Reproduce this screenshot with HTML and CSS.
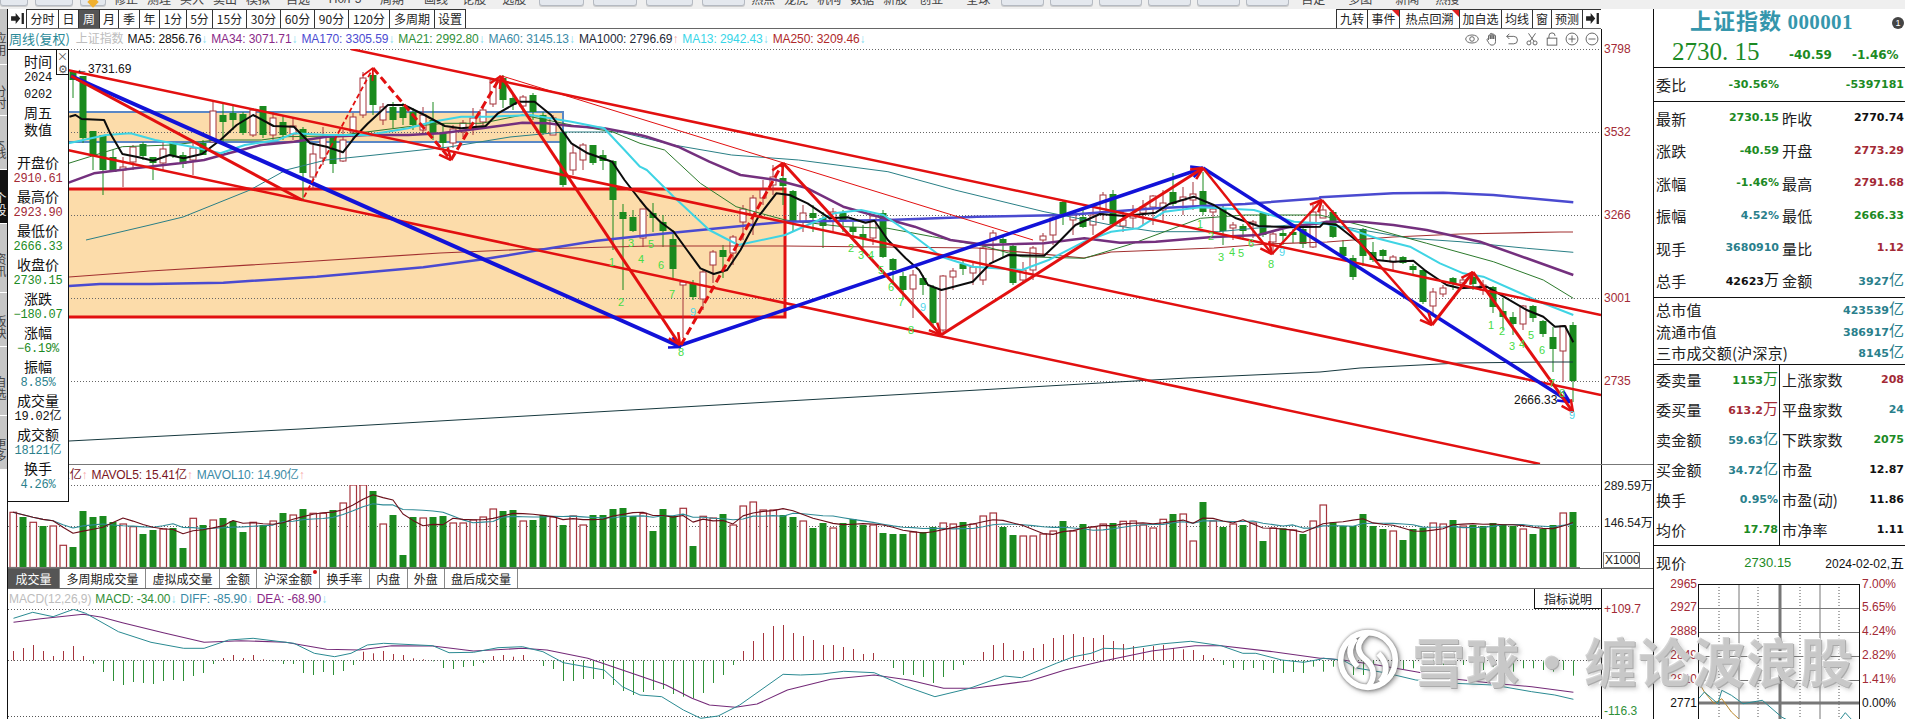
FILE: index.html
```html
<!DOCTYPE html>
<html lang="zh-CN">
<head>
<meta charset="utf-8">
<title>上证指数 周线</title>
<link rel="stylesheet" href="styles.css">
</head>
<body>
<div class="app">
  <div class="band">
    <span class="bbtn w28"></span><span class="bbtn w38"></span><span class="bbtn w26 dia"><i></i></span>
    <span class="bt ml8">修正</span><span class="bt">测理</span><span class="bt">买入</span><span class="bt">卖出</span><span class="bt">模拟</span>
    <span class="bt ml7">自选</span><span class="bt ml7 w38t">H0/F5</span><span class="bt ml7">周期</span><span class="bt ml11">画线</span><span class="bt ml5">论股</span><span class="bt ml7">选股</span>
    <span class="bbtn w45 ml4"></span><span class="bbtn w44"></span><span class="bbtn w47"></span><span class="bbtn w43"></span>
    <span class="bt ml0">热点</span><span class="bt">龙虎</span><span class="bt">机构</span><span class="bt">数据</span><span class="bt">新股</span><span class="bt ml3">创业</span><span class="bt ml14">全球</span>
    <span class="bbtn w43 ml2"></span><span class="bbtn w43"></span><span class="bbtn w43"></span><span class="bbtn w43"></span><span class="bbtn w43"></span><span class="bbtn w43"></span>
    <span class="bt ml6">自定</span><span class="bt ml14">多图</span><span class="bt ml14">新闻</span><span class="bt ml7">热搜</span>
  </div>
  <div class="main">
    <nav class="rail">
      <span class="rt h55">应用</span><span class="rt h50">分时</span><span class="rt h53">K线</span><span class="rt h53 on">个股</span><span class="rt h68">资讯</span><span class="rt h53">板块</span><span class="rt h68">自选</span><span class="rt h53">更多</span>
    </nav>
    <section class="chart">
      <div class="toolbar">
        <span class="tabs">
          <span class="arrow-btn"><svg viewBox="0 0 14 12"><path d="M0 3.500h5V0l5 6-5 6V8.500H0zM11.500 0H14v12h-2.500z"/></svg></span>
          <span class="tab w32">分时</span><span class="tab w20">日</span><span class="tab w21 on">周</span><span class="tab w19">月</span><span class="tab w21">季</span><span class="tab w20">年</span><span class="tab w27">1分</span><span class="tab w26">5分</span><span class="tab w34">15分</span><span class="tab w34">30分</span><span class="tab w34">60分</span><span class="tab w34">90分</span><span class="tab w41">120分</span><span class="tab w45">多周期</span><span class="tab w32 endb">设置</span>
        </span>
        <span class="tabs">
          <span class="tab w31">九转</span><span class="tab w32 flag">事件</span><span class="tab w60 flag">热点回溯</span><span class="tab w42">加自选</span><span class="tab w31">均线</span><span class="tab w19">窗</span><span class="tab w31">预测</span><span class="tab w19 ar"><svg viewBox="0 0 14 12"><path d="M0 3.500h5V0l5 6-5 6V8.500H0zM11.500 0H14v12h-2.500z"/></svg></span>
        </span>
      </div>

      <div class="row">
        <div class="plot">
          <div class="legend">
            <span class="c-teal">周线(复权)</span><span class="c-mute ml6">上证指数</span>
            <span class="ma ml4">MA5: 2856.76<b class="dn">↓</b></span>
            <span class="ma c-pur">MA34: 3071.71<b class="dn">↓</b></span>
            <span class="ma c-blu">MA170: 3305.59<b class="dn">↓</b></span>
            <span class="ma c-grn">MA21: 2992.80<b class="dn">↓</b></span>
            <span class="ma c-sky">MA60: 3145.13<b class="dn">↓</b></span>
            <span class="ma c-nav">MA1000: 2796.69<b class="up">↑</b></span>
            <span class="ma c-cya">MA13: 2942.43<b class="dn">↓</b></span>
            <span class="ma c-red">MA250: 3209.46<b class="dn">↓</b></span>
            <span class="tools">
              <svg viewBox="0 0 16 16"><ellipse cx="8" cy="8" rx="7.2" ry="4.6"/><circle cx="8" cy="8" r="2.6"/></svg>
              <svg viewBox="0 0 16 16"><path d="M4 9V4.500a1 1 0 0 1 2 0V8M6 8V2.500a1 1 0 0 1 2 0V8M8 8V3a1 1 0 0 1 2 0v5M10 8V4.500a1 1 0 0 1 2 0V11c0 2.500-1.500 4-4 4-2 0-3-1-4-3L2.300 9.200c-.6-1 .8-1.900 1.700-.7"/></svg>
              <svg viewBox="0 0 16 16"><path d="M5 2 2 5l3 3M2 5h8a3.800 3.800 0 0 1 0 8.500H4"/></svg>
              <svg viewBox="0 0 16 16"><circle cx="4.500" cy="12.500" r="2.300"/><circle cx="11.500" cy="12.500" r="2.300"/><path d="M5.800 10.600 12 1.500M10.200 10.600 4 1.500"/></svg>
              <svg viewBox="0 0 16 16"><rect x="2.500" y="7" width="11" height="8"/><path d="M4.500 7V4.500a3.500 3.500 0 0 1 7 0"/></svg>
              <svg viewBox="0 0 16 16"><circle cx="8" cy="8" r="6.800"/><path d="M4 8h8M8 4v8"/></svg>
              <svg viewBox="0 0 16 16"><circle cx="8" cy="8" r="6.800"/><path d="M4 8h8"/></svg>
            </span>
          </div>
          <svg id="price" class="canvas h-price" viewBox="8 49 1593 415"></svg>
        </div>
        <div class="axis ax-price">
          <span class="al h83">3798</span><span class="al h83">3532</span><span class="al h83">3266</span><span class="al h83">3001</span><span class="al h83">2735</span>
        </div>
      </div>

      <div class="row vol">
        <div class="plot">
          <div class="legend vol-legend">
            <span class="c-maroon">19.02亿<b class="up">↑</b></span>
            <span class="ma c-maroon">MAVOL5: 15.41亿<b class="up">↑</b></span>
            <span class="ma c-sky">MAVOL10: 14.90亿<b class="up">↑</b></span>
          </div>
          <svg id="volume" class="canvas h-vol" viewBox="8 485 1593 83"></svg>
        </div>
        <div class="axis ax-vol">
          <span class="al h40 dk">289.59万</span><span class="al h40 dk">146.54万</span>
          <span class="x1000">X1000</span>
        </div>
      </div>

      <div class="subtabs">
        <span class="stab w52 on">成交量</span><span class="stab w86">多周期成交量</span><span class="stab w74">虚拟成交量</span><span class="stab w37">金额</span><span class="stab w63 dot">沪深金额</span><span class="stab w50">换手率</span><span class="stab w375">内盘</span><span class="stab w375">外盘</span><span class="stab w74 endb">盘后成交量</span>
      </div>

      <div class="row macd">
        <div class="plot">
          <div class="legend">
            <span class="c-mute">MACD(12,26,9)</span>
            <span class="ma c-grn">MACD: -34.00<b class="dn">↓</b></span>
            <span class="ma c-sky">DIFF: -85.90<b class="dn">↓</b></span>
            <span class="ma c-pur">DEA: -68.90<b class="dn">↓</b></span>
            <span class="explain">指标说明</span>
          </div>
          <svg id="macd" class="canvas h-macd" viewBox="8 609 1593 110"></svg>
        </div>
        <div class="axis ax-macd">
          <span class="al h51">+109.7</span><span class="al h55 pale">+0</span><span class="al c-grn">-116.3</span>
        </div>
      </div>

      <aside class="info">
        <span class="closer"><i>×</i><i>⚙</i></span>
        <span class="cj">时间</span><span class="mn">2024</span><span class="mn">0202</span><span class="cj">周五</span><span class="cj">数值</span><span class="blank"></span>
        <span class="cj">开盘价</span><span class="mn r">2910.61</span>
        <span class="cj">最高价</span><span class="mn r">2923.90</span>
        <span class="cj">最低价</span><span class="mn g">2666.33</span>
        <span class="cj">收盘价</span><span class="mn g">2730.15</span>
        <span class="cj">涨跌</span><span class="mn g">−180.07</span>
        <span class="cj">涨幅</span><span class="mn g">−6.19%</span>
        <span class="cj">振幅</span><span class="mn t">8.85%</span>
        <span class="cj">成交量</span><span class="mn">19.02亿</span>
        <span class="cj">成交额</span><span class="mn t">18121亿</span>
        <span class="cj">换手</span><span class="mn t">4.26%</span>
      </aside>
    </section>

    <aside class="panel">
      <div class="head">
        <div class="title"><span class="tname">上证指数</span> <b>000001</b><i class="badge">1</i></div>
        <div class="pricebar"><span class="last">2730. 15</span><span class="val g hv1">-40.59</span><span class="val g hv2">-1.46%</span></div>
      </div>
      <div class="grid wb">
        <div class="cell"><span class="lbl">委比</span><span class="val g">-30.56%</span></div><div class="cell end"><span class="val g">-5397181</span></div>
      </div>
      <div class="grid quotes">
        <div class="cell"><span class="lbl">最新</span><span class="val g">2730.15</span></div><div class="cell"><span class="lbl">昨收</span><span class="val k">2770.74</span></div>
        <div class="cell"><span class="lbl">涨跌</span><span class="val g">-40.59</span></div><div class="cell"><span class="lbl">开盘</span><span class="val r">2773.29</span></div>
        <div class="cell"><span class="lbl">涨幅</span><span class="val g">-1.46%</span></div><div class="cell"><span class="lbl">最高</span><span class="val r">2791.68</span></div>
        <div class="cell"><span class="lbl">振幅</span><span class="val t">4.52%</span></div><div class="cell"><span class="lbl">最低</span><span class="val g">2666.33</span></div>
        <div class="cell"><span class="lbl">现手</span><span class="val t">3680910</span></div><div class="cell"><span class="lbl">量比</span><span class="val r">1.12</span></div>
        <div class="cell"><span class="lbl">总手</span><span class="val k">42623<u>万</u></span></div><div class="cell"><span class="lbl">金额</span><span class="val t">3927<u>亿</u></span></div>
      </div>
      <div class="wide">
        <div class="cell"><span class="lbl">总市值</span><span class="val t">423539<u>亿</u></span></div>
        <div class="cell"><span class="lbl">流通市值</span><span class="val t">386917<u>亿</u></span></div>
        <div class="cell"><span class="lbl">三市成交额(沪深京)</span><span class="val t">8145<u>亿</u></span></div>
      </div>
      <div class="grid lower">
        <div class="cell"><span class="lbl">委卖量</span><span class="val g">1153<u>万</u></span></div><div class="cell"><span class="lbl">上涨家数</span><span class="val r">208</span></div>
        <div class="cell"><span class="lbl">委买量</span><span class="val r">613.2<u>万</u></span></div><div class="cell"><span class="lbl">平盘家数</span><span class="val t">24</span></div>
        <div class="cell"><span class="lbl">卖金额</span><span class="val t">59.63<u>亿</u></span></div><div class="cell"><span class="lbl">下跌家数</span><span class="val g">2075</span></div>
        <div class="cell"><span class="lbl">买金额</span><span class="val t">34.72<u>亿</u></span></div><div class="cell"><span class="lbl">市盈</span><span class="val k">12.87</span></div>
        <div class="cell"><span class="lbl">换手</span><span class="val t">0.95%</span></div><div class="cell"><span class="lbl">市盈(动)</span><span class="val k">11.86</span></div>
        <div class="cell"><span class="lbl">均价</span><span class="val g">17.78</span></div><div class="cell"><span class="lbl">市净率</span><span class="val k">1.11</span></div>
      </div>
      <div class="cell now"><span class="lbl">现价</span><span class="nowp">2730.15</span><span class="nowd">2024-02-02,<u>五</u></span></div>
      <div class="mini">
        <div class="mini-l"><span>2965</span><span>2927</span><span>2888</span><span>2849</span><span>2810</span><span class="k">2771</span></div>
        <svg id="mini" class="mini-c" viewBox="1699 582 162 137"></svg>
        <div class="mini-r"><span>7.00%</span><span>5.65%</span><span>4.24%</span><span>2.82%</span><span>1.41%</span><span class="k">0.00%</span></div>
      </div>
    </aside>
  </div>
</div>

<div class="watermark">
  <svg viewBox="0 0 70 70">
    <circle cx="35" cy="35" r="29"/>
    <path d="M35 6C20 18 24 28 33 35 41 42 44 52 35 64"/>
    <path d="M22 12C12 24 16 34 24 42M48 58C58 46 54 36 46 28"/>
  </svg>
  <span>雪球</span><span class="wd">·</span><span>缠论波浪股</span>
</div>
<script src="script.js"></script>
</body>
</html>
```

FILE: styles.css
```css
:root{
  --cjk:"Noto Sans CJK SC","Liberation Sans",sans-serif;
  --lat:"Liberation Sans","Noto Sans CJK SC",sans-serif;
  --green:#1c8a24;
  --red:#a32a36;
  --teal:#2a7f8c;
}
*{box-sizing:border-box}
html,body{margin:0;height:719px;overflow:hidden;background:#fff}
body{position:relative;width:1905px;font-family:var(--cjk);color:#111}
i,b,u{font-style:normal;font-weight:normal;text-decoration:none}

.app{display:flex;flex-direction:column;width:1905px;height:719px}

/* clipped top ribbon */
.band{flex:0 0 9px;display:flex;align-items:flex-end;gap:9px;background:#efefef;overflow:hidden;padding:0 0 3px;font-size:12px;line-height:14px;color:#444;white-space:nowrap}
.bt{flex:0 0 24px;text-align:center}
.w38t{flex-basis:38px;font-family:var(--lat)}
.bbtn{height:16px;border:1px solid #b5bac2;border-radius:3px;background:#e4e8ee;box-shadow:0 1px 0 #ccc;flex:none}
.band .w28{width:28px}.band .w38{width:38px;margin-left:-2px}.band .w26{width:26px;margin-left:-2px}
.band .w45{width:45px}.band .w44{width:44px}.band .w47{width:47px}.band .w43{width:43px;margin-right:-3px}
.dia{position:relative}
.dia i{position:absolute;left:8px;top:7px;width:8px;height:8px;background:#f0b030;transform:rotate(45deg)}
.ml0{margin-left:0}.ml2{margin-left:2px}.ml3{margin-left:3px}.ml4{margin-left:4px}.ml5{margin-left:5px}.ml6{margin-left:6px}.ml7{margin-left:7px}.ml8{margin-left:-1px}.ml11{margin-left:11px}.ml14{margin-left:14px}

.main{flex:1;display:flex;min-height:0}

/* left rail */
.rail{flex:0 0 7px;display:flex;flex-direction:column;gap:1px;overflow:hidden}
.rt{display:block;width:7px;background:#c6c6c6;overflow:hidden;font-size:12px;line-height:14px;color:#444;writing-mode:vertical-rl;text-align:center;text-indent:14px}
.rt.on{background:#111;color:#eee}
.h55{height:55px}.h50{height:50px}.h53{height:53px}.h68{height:68px}

/* chart column */
.chart{position:relative;flex:0 0 1647px;display:flex;flex-direction:column;border-left:1px solid #111;border-right:1px solid #111;min-height:0}
.toolbar{flex:0 0 20px;width:1593px;display:flex;justify-content:space-between;border-bottom:1px solid #666;font-size:12px}
.tabs{display:flex}
.arrow-btn{width:18px;display:flex;align-items:center;justify-content:center}
.arrow-btn svg,.ar svg{width:13px;height:11px;fill:#222}
.tab{display:block;border-left:1px solid #333;border-top:1px solid #333;text-align:center;line-height:18px;height:19px;color:#222;white-space:nowrap}
.tab.on{background:#555;color:#fff}
.endb{border-right:1px solid #333}
.flag{position:relative}
.flag::after{content:"";position:absolute;right:0;top:0;border-top:7px solid #e02020;border-left:7px solid transparent}
.w19{width:19px}.w20{width:20px}.w21{width:21px}.w26{width:26px}.w27{width:27px}.w31{width:31px}.w32{width:32px}.w34{width:34px}.w41{width:41px}.w42{width:42px}.w45{width:45px}.w60{width:60px}

.row{display:flex;flex:none}
.plot{flex:0 0 1593px;display:flex;flex-direction:column;position:relative;min-width:0}
.legend{flex:0 0 20px;display:flex;align-items:center;font:12px/20px var(--lat);letter-spacing:-.08px;white-space:nowrap;padding-left:1px}
.ma{margin-left:4px}
.ml4.ma{margin-left:4px}
.dn{color:#82dcf0;font-size:12px}.up{color:#f8a8a8;font-size:12px}
.c-teal{color:#2a8a98;font-family:var(--cjk);font-size:13px;letter-spacing:0}
.c-mute{color:#bdbdbd}
.c-pur{color:#8a2a88}.c-blu{color:#4c4cd2}.c-grn{color:#2f8f38}.c-sky{color:#3a8aa6}.c-nav{color:#1e2a38}.c-cya{color:#38d6e8}.c-red{color:#b02a2a}.c-maroon{color:#7a1422}
.tools{margin-left:auto;display:flex;gap:6px;padding-right:2px}
.tools svg{width:14px;height:14px;fill:none;stroke:#555;stroke-width:1}

.canvas{display:block;width:1593px}
.h-price{height:415px}.h-vol{height:83px}.h-macd{height:110px}

.axis{flex:0 0 52px;border-left:1px solid #111;display:flex;flex-direction:column;font:12px/16px var(--lat);color:var(--red);padding-left:2px;white-space:nowrap}
.al{display:block}
.h83{height:83px}.h40{height:40px}.h51{height:51px}.h55.al{height:55px}
.dk{color:#222;font-size:12px}
.pale{color:#e0c4c4}
.ax-price{height:435px;padding-top:12px}
.vol{border-top:1px solid #777;height:104px}
.vol-legend{padding-left:32px}
.ax-vol{padding-top:13px}
.x1000{margin:auto 0 0 -1px;width:37px;height:16px;border:1px solid #777;font-size:12px;line-height:14px;color:#222;padding-left:1px}
.subtabs{flex:0 0 21px;display:flex;border-top:1px solid #666;border-bottom:1px solid #666;font-size:12px;line-height:19px;color:#222}
.stab{display:block;text-align:center;border-left:1px solid #888;position:relative;white-space:nowrap}
.stab:first-child{border-left:0}
.stab.on{background:#555;color:#fff}
.stab.endb{border-right:1px solid #888}
.dot::after{content:"";position:absolute;right:2px;top:1px;width:4px;height:4px;border-radius:50%;background:#d01010}
.w52{width:51px}.w86{width:86px}.w74{width:74px}.w37{width:37px}.w63{width:63px}.w50{width:50px}.w375{width:37.500px}
.macd{height:130px}
.explain{margin-left:auto;width:67px;height:20px;border-left:1px solid #111;border-bottom:1px solid #111;background:#fff;text-align:center;font:12px/19px var(--cjk);letter-spacing:0;color:#222}
.ax-macd{padding-top:12px}

/* info tooltip */
.info{position:absolute;left:0;top:40px;width:61px;height:453px;background:#fff;border:1px solid #111;border-left:0;padding-top:3px;display:flex;flex-direction:column;align-items:center;color:#111}
.info span{display:block;height:17px;line-height:17px;white-space:nowrap}
.cj{font-size:14px}
.mn{font-family:"Liberation Mono","Noto Sans CJK SC",monospace;font-size:12px;letter-spacing:-.2px}
.mn.r{color:var(--red)}.mn.g{color:var(--green)}.mn.t{color:var(--teal)}
.info .blank{height:16px}
.info .closer{position:absolute;right:-1px;top:-1px;width:13px;height:26px;border:1px solid #111;background:#fff;display:flex;flex-direction:column}
.closer i{display:block;height:12px;font-size:11px;line-height:12px;text-align:center;color:#555}

/* right panel */
.panel{flex:1;display:flex;flex-direction:column;min-width:0}
.head{flex:0 0 59px;border-bottom:1px solid #111;position:relative}
.title{height:28px;padding-left:36px;color:#3596ac;font:bold 22px/26px "Liberation Serif","Noto Sans CJK SC",serif;white-space:nowrap}
.tname{letter-spacing:1px}
.title b{font-weight:bold;font-size:21px;letter-spacing:.4px}
.badge{position:absolute;right:1px;top:8px;width:12px;height:12px;border-radius:50%;background:#444;color:#fff;font:9px/12px var(--lat);text-align:center}
.pricebar{display:flex;align-items:center;height:30px}
.last{width:135px;padding-left:18px;font:25px/30px "Liberation Serif",serif;color:var(--green)}
.pricebar .val{font-size:12px;padding-top:6px}
.hv1{width:44px}
.hv2{margin-left:19px}
.cell{display:flex;justify-content:space-between;align-items:center;padding:0 1px 0 2px;min-width:0;white-space:nowrap}
.cell.end{justify-content:flex-end}
.lbl{font-size:15px;color:#222;letter-spacing:.2px}
.val{font:bold 11px/16px "DejaVu Sans",sans-serif}
.val u{font:15px/16px var(--cjk)}
.g{color:var(--green)}.r{color:var(--red)}.t{color:var(--teal)}.k{color:#111}
.grid{display:grid;grid-template-columns:126px 1fr}
.wb{flex:0 0 34px;border-bottom:1px solid #111}
.quotes{flex:0 0 195px;grid-auto-rows:32.500px;border-bottom:1px solid #111}
.wide{flex:0 0 66px;border-bottom:1px solid #111;display:grid;grid-auto-rows:21.500px;padding-top:1px}
.lower{flex:0 0 181px;grid-auto-rows:30px;border-bottom:1px solid #111;position:relative}
.lower .cell:nth-child(odd){border-right:1px solid #111}
.now{flex:0 0 30px;padding-top:4px}
.nowp{font:13px/16px var(--lat);color:var(--green);margin-left:24px}
.nowd{font:12px/16px var(--lat);color:#111}
.nowd u{font:14px/16px var(--cjk)}
.mini{flex:1;display:flex;min-height:0}
.mini-l,.mini-r{display:flex;flex-direction:column;font:12px/16px var(--lat);color:var(--red)}
.mini-l{flex:0 0 44px;text-align:right;padding-right:1px}
.mini-r{flex:1;padding-left:2px}
.mini-l span,.mini-r span{display:block;height:24px}
.mini-l .k,.mini-r .k{color:#111}
.mini-c{flex:0 0 162px;width:162px;height:137px;margin-top:8px}

/* watermark */
.watermark{position:absolute;left:1333px;top:627px;height:66px;display:flex;align-items:center;pointer-events:none;font:bold 53px/66px var(--cjk);letter-spacing:1px;color:rgba(206,206,206,.85);text-shadow:1px 1px 0 #aaa,-1px -1px 0 rgba(255,255,255,.95),3px 3px 4px rgba(120,120,120,.35);white-space:nowrap}
.watermark svg{width:70px;height:66px;margin-right:9px;flex:none;fill:none;stroke:#fff;stroke-width:6;filter:drop-shadow(0 0 1.500px rgba(90,90,90,.8)) drop-shadow(2px 2px 2px rgba(90,90,90,.5))}
.wd{width:64px;text-align:center}
```

FILE: script.js
```js
// Weekly chart data, read off the reference and drawn as SVG.
const GREEN = '#1a8a1e', HOLLOW = '#a5343c', TREND = '#e21010', BLUE = '#1212d8';
const cx = i => 13 + 10 * i;
const line = (a, b, c, d, col, w, dash) =>
  `<line x1="${a}" y1="${b}" x2="${c}" y2="${d}" stroke="${col}" stroke-width="${w}"${dash ? ` stroke-dasharray="${dash}"` : ''}/>`;
const poly = (pts, col, w) =>
  `<polyline points="${pts.map(p => p.map(v => +v.toFixed(1)).join(',')).join(' ')}" fill="none" stroke="${col}" stroke-width="${w}" stroke-linejoin="round"/>`;
const from = (xo, xs, yo, flat) => {
  const r = [];
  for (let k = 0; k < flat.length; k += 2) r.push([xo + flat[k] / xs, yo + flat[k + 1] / 3]);
  return r;
};
const A = a => from(0, 2.45, 0, a);          // left part of the chart
const B = a => from(620, 2.24, 100, a);      // middle part
const C = a => from(1260, 3, 180, a);        // right part

// type, top, bottom, wick top, wick bottom; starts at bar 6
const candles = `g 72 80 70 98|g 76 138 76 143|g 131 155 131 170|g 135 170 135 195|g 157 172 150 172|r 167 170 157 187|r 147 162 145 170|g 144 156 142 160|g 157 163 157 180|r 149 163 142 170|g 143 156 142 158|g 155 164 152 168|r 148 160 140 175|g 143 155 140 155|r 111 142 102 142|g 115 122 103 142|g 113 120 106 130|g 114 133 112 135|r 110 135 108 137|g 106 135 106 138|r 118 135 112 140|g 122 135 115 140|r 126 134 117 140|g 129 173 127 200|r 154 177 145 190|r 137 158 127 165|g 137 164 135 173|r 140 161 130 162|r 117 132 113 140|r 78 115 72 118|g 75 105 73 115|r 107 120 103 125|g 107 120 102 128|g 107 118 103 125|g 112 125 108 130|r 115 130 107 135|g 120 133 102 140|g 132 143 125 150|r 129 143 125 148|r 123 132 120 137|r 118 128 108 135|r 110 122 105 125|r 80 104 78 107|g 78 100 75 108|g 98 105 93 110|r 97 106 95 112|g 95 112 93 120|g 115 133 112 135|r 118 135 115 135|g 132 185 130 187|r 153 170 145 175|r 145 160 143 170|g 145 163 145 165|g 155 161 150 170|g 161 200 160 250|g 212 219 204 290|g 217 231 210 232|r 209 238 209 247|g 213 218 203 232|g 222 231 215 247|g 239 269 230 278|r 282 285 282 338|g 283 297 280 300|r 272 299 270 310|r 252 265 250 283|g 250 257 245 278|r 237 253 235 265|r 209 222 205 240|r 198 215 195 235|r 190 198 180 205|r 177 185 165 195|g 178 186 165 205|g 191 221 190 232|r 213 222 205 232|g 213 218 205 232|g 218 226 212 248|r 212 221 208 232|g 213 222 210 232|g 227 232 222 240|g 234 238 225 248|r 216 238 214 245|g 213 257 210 258|g 259 270 258 285|g 276 290 272 300|r 275 289 270 318|g 278 285 275 295|g 287 323 285 325|r 276 330 275 332|r 271 277 268 290|g 264 269 260 275|r 267 273 262 285|r 248 280 245 285|r 233 240 230 262|g 239 243 235 258|g 246 283 244 285|r 270 280 262 282|r 248 270 246 280|r 236 240 233 255|r 218 235 215 245|g 202 215 200 225|r 215 220 212 235|g 217 227 210 228|r 215 225 205 235|r 195 212 192 220|g 194 224 190 226|r 220 226 210 232|r 215 218 205 228|r 207 213 200 225|r 196 207 195 225|r 203 210 190 222|g 192 204 173 206|r 197 200 187 215|r 194 200 182 210|g 191 212 172 215|r 209 212 205 232|g 209 231 205 245|r 225 228 222 240|g 226 231 224 240|r 222 224 220 238|g 213 235 212 237|r 234 242 232 255|g 233 236 230 245|g 232 235 229 243|g 229 244 228 248|r 212 247 205 248|r 210 218 205 218|g 212 237 210 238|g 247 256 240 258|g 258 277 255 280|g 229 256 228 266|g 252 260 242 262|g 250 256 249 260|r 257 262 255 270|g 257 263 256 264|g 266 270 264 275|g 270 302 270 304|r 292 306 288 315|r 288 294 285 297|g 278 284 277 290|r 280 283 278 288|g 277 284 276 290|r 285 290 280 295|g 287 307 286 313|g 311 317 298 330|g 317 324 312 335|r 306 324 305 330|g 306 318 305 322|g 321 334 320 337|g 337 349 327 372|r 326 351 325 382|g 325 381 322 402`.split('|');

function drawPrice() {
  let s = '';
  // shaded zones
  s += `<rect x="8" y="112" width="555" height="30" fill="#fcdcaa"/>`;
  s += `<rect x="8" y="189" width="777" height="128" fill="#fcdcaa"/>`;
  s += `<rect x="8" y="112" width="555" height="30" fill="none" stroke="#5a88c6" stroke-width="2"/>`;
  s += `<rect x="8" y="189" width="777" height="128" fill="none" stroke="${TREND}" stroke-width="3"/>`;
  [49, 132, 215, 298, 381].forEach(y => { s += line(8, y + .5, 1601, y + .5, '#666', 1, '1 2'); });
  // candles
  candles.forEach((c, k) => {
    const [t, a, b, wa, wb] = c.split(' ');
    const x = cx(k + 6), col = t === 'g' ? GREEN : HOLLOW;
    s += line(x, +wa, x, +wb, col, 1);
    s += t === 'g'
      ? `<rect x="${x - 3.5}" y="${a}" width="7" height="${b - a}" fill="${col}"/>`
      : `<rect x="${x - 3}" y="${a}" width="6" height="${b - a}" fill="#fff" stroke="${col}" stroke-width="1"/>`;
  });
  // moving averages
  const ma1000 = [[8, 443], [69, 441], [300, 429], [1187, 378], [1320, 372], [1360, 368], [1460, 363], [1547, 362], [1573, 362]];
  s += poly(ma1000, '#17393f', 1);
  const ma250 = [[8, 282], [69, 277], [150, 271], [300, 262], [440, 253], [533, 249], [650, 246], [785, 246], [977, 248], [1084, 258], [1111, 252], [1214, 248], [1267, 244], [1327, 242], [1393, 237], [1460, 234], [1560, 232], [1573, 232]];
  s += poly(ma250, '#a23030', 1.2);
  const ma60 = [[86, 240], ...[[150, 225], [183, 217], [250, 190], [286, 170], [326, 160], [375, 155], [449, 147], [510, 137], [563, 132], [620, 132]], ...B([120, 135, 250, 165, 400, 180, 600, 215, 750, 270, 950, 335, 1100, 375, 1200, 395, 1340, 395, 1500, 375, 1568, 370]), ...C([250, 140, 450, 175, 600, 185, 800, 205, 940, 217])];
  s += poly(ma60, '#2a7f86', 1);
  const ma21 = [...A([168, 490, 220, 470, 300, 440, 420, 435, 530, 420, 640, 420, 700, 410, 820, 408, 1000, 380, 1090, 370, 1180, 370, 1280, 345, 1400, 375, 1500, 395, 1568, 430]), ...B([100, 150, 180, 250, 260, 320, 370, 360, 500, 380, 600, 385, 700, 410, 820, 440, 900, 470, 1040, 475, 1150, 430, 1300, 355, 1400, 345, 1568, 345]), ...C([300, 135, 500, 190, 700, 245, 850, 300, 940, 355])];
  s += poly(ma21, '#2c7a2c', 1);
  const ma170 = [[8, 287], [69, 286], [100, 284], [150, 284], ...from(150, 3, 180, [220, 308, 500, 290, 820, 262, 1000, 238, 1200, 205, 1340, 182, 1500, 165]), ...B([370, 365, 600, 360, 800, 350, 1000, 345, 1200, 325, 1400, 312, 1568, 295]), ...C([180, 52, 400, 40, 550, 38, 700, 45, 940, 67])];
  s += poly(ma170, '#4a4ad0', 2.5);
  const ma34 = [...A([168, 548, 230, 520, 330, 505, 440, 490, 500, 480, 560, 460, 640, 435, 720, 425, 800, 410, 900, 405, 1000, 405, 1080, 400, 1180, 385, 1280, 368, 1340, 370, 1400, 378, 1480, 385, 1568, 405]), ...B([60, 110, 130, 140, 200, 185, 270, 225, 350, 240, 420, 265, 500, 320, 580, 350, 660, 380, 740, 420, 820, 435, 950, 430, 1040, 415, 1120, 428, 1200, 425, 1320, 412, 1430, 405, 1500, 380, 1568, 370]), ...C([200, 125, 300, 125, 400, 135, 500, 150, 660, 185, 800, 235, 940, 285])];
  s += poly(ma34, '#74307e', 2.5);
  const ma13 = [...A([168, 430, 260, 405, 320, 400, 380, 420, 470, 440, 540, 460, 600, 435, 680, 420, 720, 400, 800, 405, 900, 405, 1000, 385, 1060, 365, 1130, 350, 1200, 350, 1300, 345, 1400, 365, 1480, 385, 1530, 450, 1568, 500]), ...B([60, 210, 120, 290, 200, 390, 265, 435, 370, 405, 420, 375, 480, 340, 540, 330, 590, 345, 650, 400, 720, 470, 790, 500, 900, 510, 960, 480, 1040, 425, 1100, 395, 1160, 385, 1220, 335, 1300, 322, 1420, 330, 1510, 365, 1568, 370]), ...C([190, 130, 260, 145, 350, 175, 450, 200, 540, 250, 610, 280, 670, 290, 760, 330, 850, 370, 940, 405])];
  s += poly(ma13, '#3fd4e4', 2);
  const ma5 = [...A([170, 350, 185, 345, 200, 357, 255, 360, 270, 400, 300, 462, 340, 472, 375, 482, 415, 465, 450, 475, 495, 462, 540, 420, 580, 375, 620, 345, 670, 378, 720, 380, 760, 430, 800, 440, 840, 457, 870, 410, 900, 372, 950, 315, 990, 315, 1040, 345, 1090, 378, 1130, 385, 1190, 378, 1220, 340, 1270, 305, 1310, 305, 1350, 345, 1400, 430, 1440, 460, 1500, 485, 1530, 540, 1568, 600]), ...B([60, 325, 90, 365, 120, 395, 150, 450, 180, 505, 210, 522, 240, 510, 270, 450, 310, 350, 350, 280, 380, 285, 420, 310, 470, 355, 510, 352, 550, 368, 570, 362, 600, 420, 640, 475, 670, 510, 690, 555, 720, 570, 790, 545, 830, 490, 870, 465, 950, 467, 980, 430, 1020, 375, 1075, 342, 1130, 348, 1200, 338, 1230, 312, 1285, 290, 1330, 315, 1380, 355, 1430, 378, 1500, 382, 1568, 380]), ...C([190, 130, 230, 135, 300, 190, 350, 240, 400, 245, 460, 242, 500, 275, 560, 315, 600, 325, 680, 320, 740, 355, 800, 390, 850, 410, 885, 440, 915, 438, 940, 487])];
  s += poly(ma5, '#0c0c0c', 2);

  // channels
  s += line(351, 49, 1601, 315, TREND, 2.5);
  s += line(58, 68, 1601, 395, TREND, 2.5);
  s += line(58, 148, 1540, 464, TREND, 2.5);
  s += line(502, 76, 1033, 240, TREND, 1);
  // swings
  const arrow = (a, b, c, d, col, w, dash) => {
    const an = Math.atan2(d - b, c - a), L = 13, sp = .45;
    let o = line(a, b, c, d, col, w, dash);
    [an + sp, an - sp].forEach(t => {
      o += line(c, d, +(c - L * Math.cos(t)).toFixed(1), +(d - L * Math.sin(t)).toFixed(1), col, Math.min(w, 2.5));
    });
    return o;
  };
  s += arrow(71, 76, 681, 347, BLUE, 4);
  s += arrow(681, 345, 1203, 168, BLUE, 3.5);
  s += arrow(1203, 168, 1570, 402, BLUE, 3.5);
  s += line(71, 76, 302, 200, TREND, 3);
  s += arrow(304, 197, 373, 68, TREND, 1.8, '5 3');
  s += arrow(373, 68, 451, 160, TREND, 3, '8 4');
  s += arrow(451, 160, 501, 76, TREND, 3, '8 4');
  s += arrow(501, 76, 680, 345, TREND, 3);
  s += arrow(681, 345, 783, 163, TREND, 3, '8 4');
  s += arrow(783, 163, 941, 335, TREND, 3);
  s += arrow(941, 335, 1203, 168, TREND, 3);
  s += arrow(1203, 168, 1272, 254, TREND, 2.5);
  s += arrow(1272, 254, 1322, 200, TREND, 2.5);
  s += arrow(1322, 200, 1432, 325, TREND, 2.5);
  s += arrow(1432, 325, 1473, 272, TREND, 3);
  s += arrow(1473, 272, 1573, 412, TREND, 3);

  // countdown numbers
  const lime = '#46dc46', cy = '#4fd6ea';
  const nums = [['1', 612, 262], ['2', 621, 302], ['3', 631, 243], ['4', 641, 259], ['5', 651, 244], ['6', 661, 265], ['7', 672, 294], ['8', 681, 352], ['9', 693, 312, cy],
    ['2', 851, 248], ['3', 861, 255], ['4', 871, 255], ['5', 881, 270], ['6', 891, 287], ['7', 901, 302], ['8', 911, 330], ['9', 923, 307, cy],
    ['1', 1200, 224], ['2', 1211, 236], ['3', 1221, 257], ['4', 1232, 252], ['5', 1241, 253], ['6', 1251, 243], ['8', 1271, 264], ['9', 1282, 252, cy],
    ['1', 1491, 325], ['2', 1502, 331], ['3', 1512, 346], ['4', 1522, 344], ['5', 1531, 335], ['6', 1542, 350], ['7', 1552, 383], ['8', 1562, 393], ['9', 1572, 415, cy]];
  nums.forEach(([t, x, y, c]) => {
    s += `<text x="${x}" y="${y + 4}" text-anchor="middle" font-family="Liberation Sans" font-size="11" fill="${c || lime}">${t}</text>`;
  });
  s += `<text x="76" y="73" font-family="Liberation Sans" font-size="12" fill="#111">←3731.69</text>`;
  s += `<text x="1514" y="404" font-family="Liberation Sans" font-size="12" fill="#111">2666.33</text>`;
  document.getElementById('price').innerHTML = s;
}

// volume as zoomed top edges: base at 264, 3 units per pixel
const volumes = 'r97 g111 r127 g138 r138 r196 g201 g93 g111 g108 g126 r132 r140 g162 g150 r147 g144 g204 r115 g135 r120 g114 g123 g156 r127 g135 r123 g99 r105 g87 r100 r100 g90 r69 r15 r15 g33 r132 g105 g225 g111 r114 g111 g108 r129 r129 r120 r111 r87 g93 g90 r123 g120 g105 r111 g135 r108 r135 g105 g105 g87 g84 g108 r100 g153 g87 g108 r85 g198 r109 r114 g102 r135 r78 r66 r90 r90 g105 g111 r123 g144 g129 r144 g129 g117 g135 r135 g159 g162 g162 r156 g156 g141 r129 r132 g126 r132 r108 r99 g141 g165 r168 r168 r162 r153 g123 r153 g132 r141 r132 g129 r124 r123 r135 r144 r118 g102 r102 r183 g66 r123 g141 r132 g135 r129 g183 r144 g145 r150 g162 r123 r75 g127 g138 g138 g102 g138 g147 r153 g180 g147 g143 r129 r132 g120 r138 g135 g138 g129 g132 g138 r147 g162 g147 g135 r99 g96'.split(' ');

function drawVolume() {
  const hs = volumes.map(v => (264 - +v.slice(1)) / 3);
  let s = line(8, 485.5, 1601, 485.5, '#666', 1, '1 2') + line(8, 526.5, 1601, 526.5, '#666', 1, '1 2');
  volumes.forEach((v, i) => {
    const x = cx(i), h = hs[i], top = 568 - h;
    s += v[0] === 'g'
      ? `<rect x="${x - 3.5}" y="${top.toFixed(1)}" width="7" height="${h.toFixed(1)}" fill="${GREEN}"/>`
      : `<rect x="${x - 3}" y="${top.toFixed(1)}" width="6.5" height="${(h - .5).toFixed(1)}" fill="#fff" stroke="${HOLLOW}" stroke-width="1.2"/>`;
  });
  const avg = n => hs.map((_, i) => {
    const w = hs.slice(Math.max(0, i - n + 1), i + 1);
    return [cx(i), 568 - w.reduce((a, b) => a + b, 0) / w.length];
  });
  s += poly(avg(10), '#2f8a96', 1.1);
  s += poly(avg(5), '#6b0f1a', 1.1);
  s += line(8, 567.5, 1580, 567.5, '#777', 1);
  document.getElementById('volume').innerHTML = s;
}

// MACD bars as zoomed bar ends: zero at 541, 3 units per pixel
const macdBars = [513,504,495,513,528,513,498,528,551,576,603,615,606,609,612,603,600,603,588,579,552,534,525,534,525,538,544,552,552,579,585,576,585,573,555,515,520,513,522,525,535,538,544,564,567,561,558,549,528,525,530,525,540,558,567,603,603,597,597,597,615,633,645,
  636,630,627,642,650,655,639,609,585,555,513,483,459,438,435,459,468,480,495,495,501,507,522,519,541,564,585,585,591,609,591,570,555,540,516,495,489,510,513,504,492,474,465,462,471,474,465,483,492,498,504,498,495,504,508,510,525,534,555,564,570,564,570,579,579,576,579,560,
  575,560,570,585,585,590,590,590,567,565,560,565,560,570,555,565,570,565,570,575,565,565,570,575,570,587];

function drawMacd() {
  const P = a => from(0, 2.45, 480, a), Q = a => from(640, 2.306, 480, a), R = a => from(1300, 2.59, 480, a);
  let s = '';
  [609, 660, 716].forEach(y => { s += line(8, y + .5, 1601, y + .5, '#555', 1, '1 2'); });
  macdBars.forEach((z, i) => {
    const x = cx(i) + .5, y = 480 + z / 3;
    s += line(x, 660.5, x, +y.toFixed(1), z < 541 ? HOLLOW : '#2f8f38', 1);
  });
  const dea = [...P([33, 427, 100, 416, 204, 403, 250, 412, 300, 428, 400, 458, 500, 487, 590, 482, 700, 487, 800, 508, 880, 510, 960, 497, 1060, 498, 1160, 513, 1280, 505, 1340, 510, 1440, 535, 1568, 588]), ...Q([60, 615, 120, 655, 160, 675, 220, 682, 270, 672, 340, 630, 440, 598, 540, 585, 620, 600, 700, 625, 770, 625, 900, 602, 980, 570, 1060, 545, 1180, 513, 1280, 497, 1340, 497, 1460, 515, 1568, 535]), ...R([60, 535, 110, 540, 200, 555, 300, 575, 400, 597, 500, 610, 600, 620, 708, 637])];
  const diff = [...P([33, 415, 80, 397, 130, 410, 180, 388, 210, 400, 290, 455, 370, 487, 450, 505, 500, 505, 560, 480, 620, 475, 720, 490, 770, 520, 820, 530, 860, 520, 900, 495, 940, 490, 1060, 497, 1100, 518, 1160, 517, 1220, 503, 1280, 500, 1330, 515, 1380, 548, 1480, 570, 1525, 620, 1568, 645]), ...Q([50, 650, 100, 690, 140, 715, 180, 708, 230, 675, 330, 583, 370, 585, 420, 582, 470, 574, 540, 578, 610, 618, 680, 650, 760, 625, 840, 588, 880, 593, 960, 550, 1000, 530, 1040, 520, 1070, 505, 1120, 507, 1200, 492, 1270, 484, 1340, 497, 1390, 520, 1420, 520, 1480, 540, 1530, 547, 1568, 538]), ...R([60, 535, 110, 540, 150, 565, 220, 578, 300, 600, 400, 610, 500, 615, 600, 635, 660, 645, 708, 658])];
  s += poly(dea, '#742a78', 1.1) + poly(diff, '#2a8a92', 1);
  document.getElementById('macd').innerHTML = s;
}

function drawMini() {
  const R = a => from(1300, 2.59, 480, a);
  let s = '<rect x="1699" y="582" width="162" height="137" fill="#fff"/>';
  [1720, 1759, 1801, 1840].forEach(x => { s += line(x, 582, x, 719, '#555', 1, '1 2'); });
  [1740, 1821].forEach(x => { s += line(x, 582, x, 719, '#777', 1); });
  [606, 630, 654, 678].forEach(y => { s += line(1699, y + .5, 1861, y + .5, '#777', 1); });
  s += line(1781, 582, 1781, 719, '#777', 3);
  s += line(1699, 701, 1861, 701, '#777', 3);
  s += poly(R([1040, 610, 1050, 630, 1075, 665, 1095, 650, 1120, 690, 1145, 717, 1165, 722]), '#b8862b', 1);
  s += poly(R([1035, 650, 1050, 630, 1065, 645, 1085, 665, 1095, 625, 1120, 640, 1150, 665, 1200, 655, 1250, 705, 1270, 717, 1285, 722]), '#2a8a92', 1);
  s += poly(R([1395, 722, 1415, 692, 1425, 705, 1435, 717, 1445, 722]), '#2a8a92', 1);
  s += '<rect x="1699.5" y="582.5" width="161" height="140" fill="none" stroke="#111"/>';
  document.getElementById('mini').innerHTML = s;
}

drawPrice();
drawVolume();
drawMacd();
drawMini();
```
